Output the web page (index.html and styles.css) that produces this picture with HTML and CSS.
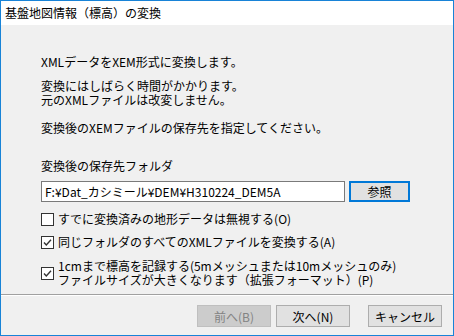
FILE: index.html
```html
<!DOCTYPE html>
<html lang="ja">
<head>
    <meta charset="UTF-8">
    <title>基盤地図情報（標高）の変換</title>
    <link rel="stylesheet" href="styles.css">
</head>
<body>
    <div class="window">
        <div class="titlebar">基盤地図情報（標高）の変換</div>

        <div class="content">
            <p class="msg first">XMLデータをXEM形式に変換します。</p>
            <p class="msg">変換にはしばらく時間がかかります。<br>元のXMLファイルは改変しません。</p>
            <p class="msg">変換後のXEMファイルの保存先を指定してください。</p>

            <div class="label">変換後の保存先フォルダ</div>
            <div class="path-row">
                <div class="path-input">F:¥Dat_カシミール¥DEM¥H310224_DEM5A</div>
                <button class="btn browse">参照</button>
            </div>

            <label class="check one">
                <span class="box"></span>
                <span>すでに変換済みの地形データは無視する(O)</span>
            </label>
            <label class="check two">
                <span class="box">
                    <svg width="11" height="11" viewBox="0 0 11 11"><path d="M2 5.5 L4.3 8 L9 2.8" fill="none" stroke="#333" stroke-width="1.4"/></svg>
                </span>
                <span>同じフォルダのすべてのXMLファイルを変換する(A)</span>
            </label>
            <label class="check three">
                <span class="box">
                    <svg width="11" height="11" viewBox="0 0 11 11"><path d="M2 5.5 L4.3 8 L9 2.8" fill="none" stroke="#333" stroke-width="1.4"/></svg>
                </span>
                <span>1cmまで標高を記録する(5mメッシュまたは10mメッシュのみ)<br>ファイルサイズが大きくなります（拡張フォーマット）(P)</span>
            </label>
        </div>

        <div class="footer">
            <button class="btn nav" disabled>前へ(B)</button>
            <button class="btn nav">次へ(N)</button>
            <button class="btn nav cancel">キャンセル</button>
        </div>
    </div>
</body>
</html>
```

FILE: styles.css
```css
* {
    box-sizing: border-box;
}
body {
    margin: 0;
    font-family: "Noto Sans CJK JP", "Noto Sans", sans-serif;
    font-size: 12px;
    color: #000;
}
.window {
    width: 454px;
    height: 336px;
    border: 1px solid #1883d7;
    background: #f0f0f0;
    display: flex;
    flex-direction: column;
}
.titlebar {
    height: 24px;
    line-height: 24px;
    padding-left: 4px;
    background: #fff;
}
.content {
    flex: 1;
    padding: 30px 0 0 40px;
    line-height: 14px;
}
.msg {
    margin: 10px 0 0;
}
.msg.first {
    margin-top: 0;
}
.msg + .msg + .msg {
    margin-top: 14px;
}
.label {
    margin-top: 24px;
}
.path-row {
    display: flex;
    gap: 4px;
    margin-top: 8px;
}
.path-input {
    width: 304px;
    height: 21px;
    line-height: 19px;
    padding-left: 3px;
    background: #fff;
    border: 1px solid #7a7a7a;
}
.btn {
    font-family: inherit;
    font-size: 12px;
    color: #000;
    background: #e1e1e1;
    border: 1px solid #adadad;
    padding: 0;
}
.browse {
    width: 61px;
    height: 21px;
    border: 2px solid #0078d7;
}
.check {
    display: flex;
    align-items: center;
    gap: 4px;
    margin-top: 10px;
}
.check.two {
    margin-top: 9px;
}
.box {
    width: 13px;
    height: 13px;
    border: 1px solid #333;
    background: #fff;
    display: flex;
    align-items: center;
    justify-content: center;
}
.footer {
    height: 41px;
    border-top: 1px solid #a0a0a0;
    box-shadow: inset 0 1px 0 #fff;
    display: flex;
    justify-content: flex-end;
    align-items: flex-start;
    padding: 10px 11px 0 0;
}
.nav {
    width: 74px;
    height: 22px;
}
.nav + .nav {
    margin-left: 5px;
}
.nav.cancel {
    margin-left: 18px;
}
.nav:disabled {
    background: #cccccc;
    border-color: #bfbfbf;
    color: #838383;
}
```
